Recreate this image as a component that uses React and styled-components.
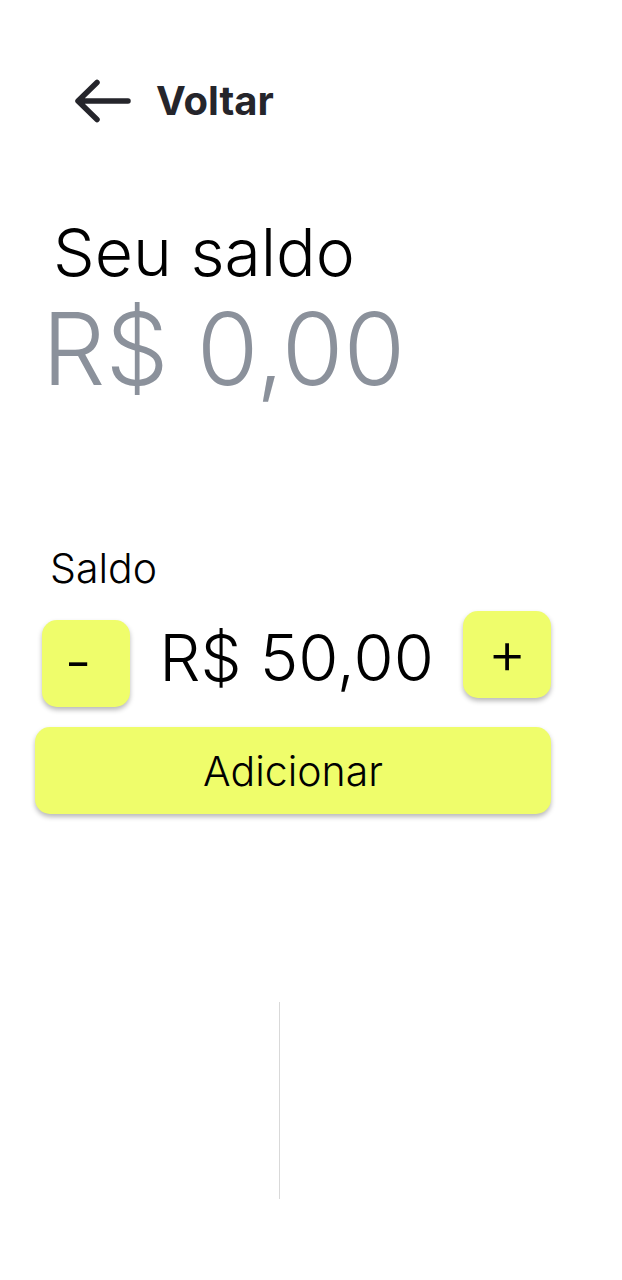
import React, { useState } from 'react';
import styled, { createGlobalStyle } from 'styled-components';

const GlobalStyle = createGlobalStyle`
  html, body {
    margin: 0;
    padding: 0;
    background: #ffffff;
  }
  body {
    font-family: Inter, 'Noto Sans', sans-serif;
    color: #000;
  }
`;

const Page = styled.main`
  width: 622px;
  min-height: 1280px;
  display: flex;
  flex-direction: column;
`;

const Header = styled.button`
  display: flex;
  align-items: center;
  gap: 24px;
  margin: 76px 0 0 74px;
  padding: 0;
  border: 0;
  background: none;
  cursor: pointer;
  align-self: flex-start;
  color: #25252b;
  font-family: Inter, sans-serif;
  font-weight: 700;
  font-size: 40px;
  line-height: 50px;
`;

const Balance = styled.section`
  margin-top: 90px;
  display: flex;
  flex-direction: column;
`;

const BalanceTitle = styled.h2`
  margin: 0 0 0 53px;
  font-weight: 300;
  font-size: 66px;
  line-height: 72px;
  color: #000;
`;

const BalanceValue = styled.div`
  margin: 6px 0 0 42px;
  font-size: 100px;
  line-height: 110px;
  font-weight: 300;
  color: #8b919b;
`;

const Form = styled.section`
  margin: 140px 0 0 35px;
  width: 516px;
  display: flex;
  flex-direction: column;
`;

const Label = styled.label`
  margin-left: 15px;
  font-size: 41px;
  line-height: 48px;
  font-weight: 300;
  color: #000;
`;

const StepperRow = styled.div`
  margin-top: 19px;
  display: flex;
  align-items: flex-start;
  justify-content: space-between;
`;

const StepButton = styled.button`
  width: 88px;
  height: 87px;
  margin-top: ${p => p.$offset}px;
  margin-left: ${p => p.$indent || 0}px;
  padding: 0 ${p => p.$shift || 0}px 6px 0;
  border: 0;
  border-radius: 15px;
  background: #effd6b;
  box-shadow: 0 3px 5px rgba(0, 0, 0, 0.28);
  font-family: Inter, sans-serif;
  font-size: 60px;
  font-weight: 300;
  line-height: 1;
  color: #000;
  display: flex;
  align-items: center;
  justify-content: center;
  cursor: pointer;
`;

const Amount = styled.div`
  margin-top: 7px;
  font-size: 65px;
  line-height: 80px;
  font-weight: 300;
  color: #000;
`;

const AddButton = styled.button`
  margin-top: 20px;
  height: 87px;
  width: 100%;
  border: 0;
  border-radius: 15px;
  background: #effd6b;
  box-shadow: 0 3px 5px rgba(0, 0, 0, 0.28);
  font-family: Inter, sans-serif;
  font-size: 41px;
  font-weight: 300;
  color: #000;
  cursor: pointer;
`;

const Divider = styled.div`
  margin: 188px 0 0 279px;
  width: 1px;
  height: 197px;
  background: #d9d9d9;
`;

function ArrowLeft() {
  return (
    <svg width="58" height="46" viewBox="0 0 58 46" fill="none">
      <path
        d="M54 23H5M23 4.5L4 23l19 18.5"
        stroke="#25252b"
        strokeWidth="5.5"
        strokeLinecap="round"
        strokeLinejoin="round"
      />
    </svg>
  );
}

const fmt = v => 'R$ ' + v.toFixed(2).replace('.', ',');

export default function App() {
  const [amount, setAmount] = useState(50);
  return (
    <Page>
      <GlobalStyle />
      <Header>
        <ArrowLeft />
        Voltar
      </Header>
      <Balance>
        <BalanceTitle>Seu saldo</BalanceTitle>
        <BalanceValue>{fmt(0)}</BalanceValue>
      </Balance>
      <Form>
        <Label>Saldo</Label>
        <StepperRow>
          <StepButton $offset={9} $indent={7} $shift={16} onClick={() => setAmount(a => Math.max(0, a - 10))}>-</StepButton>
          <Amount>{fmt(amount)}</Amount>
          <StepButton $offset={0} onClick={() => setAmount(a => a + 10)}>+</StepButton>
        </StepperRow>
        <AddButton>Adicionar</AddButton>
      </Form>
      <Divider />
    </Page>
  );
}
